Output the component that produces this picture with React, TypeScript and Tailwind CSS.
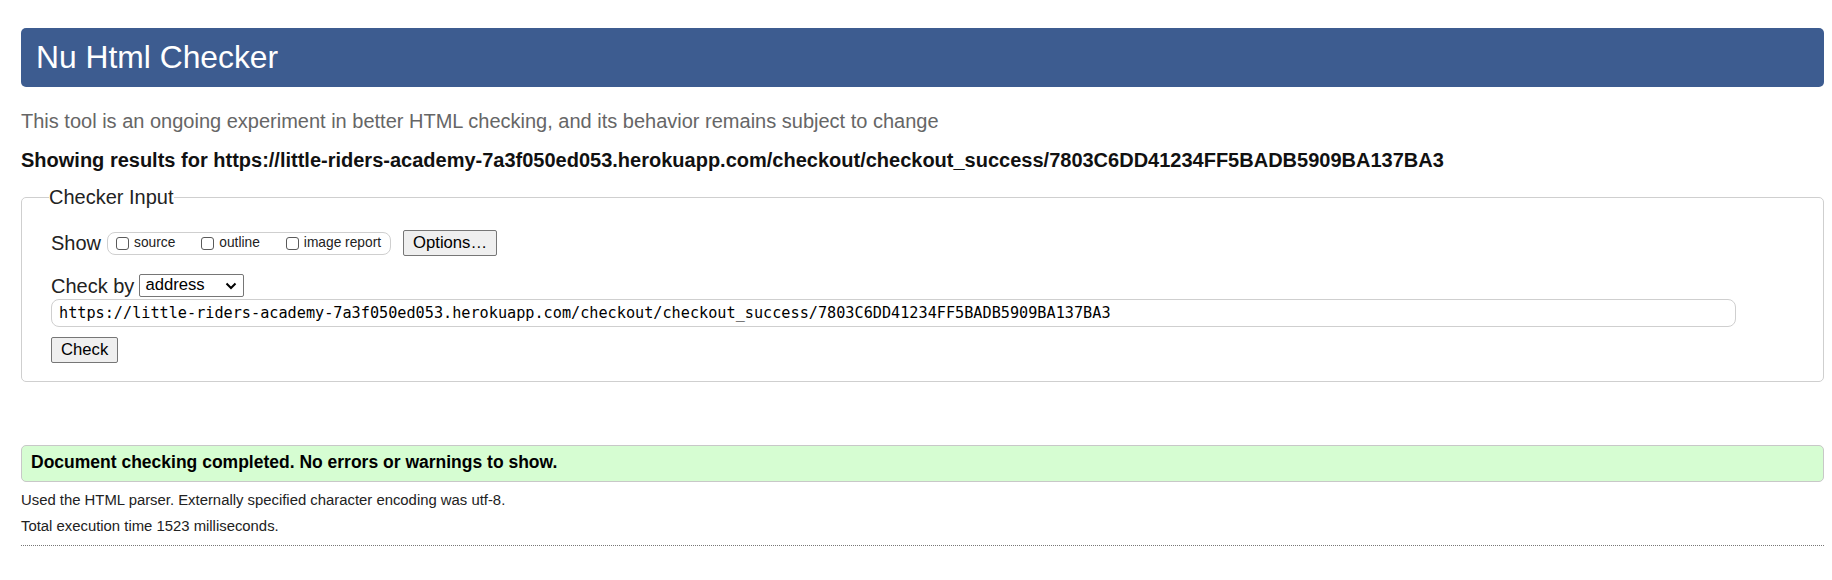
const URL_TEXT =
  "https://little-riders-academy-7a3f050ed053.herokuapp.com/checkout/checkout_success/7803C6DD41234FF5BADB5909BA137BA3";

const SHOW_OPTIONS = ["source", "outline", "image report"];

function NativeButton({ label }: { label: string }) {
  return (
    <button className="flex h-[26px] items-center rounded-[2px] border border-[#767676] bg-[#efefef] px-[9px] text-[16.67px] leading-none text-black">
      {label}
    </button>
  );
}

export default function App() {
  return (
    <div className="min-h-[580px] bg-white pl-[21px] pr-[8px] pt-[28px] font-['Liberation_Sans',Arial,sans-serif] text-[#1a1a1a]">
      {/* Title bar */}
      <h1 className="flex h-[59px] items-center rounded-[5px] bg-[#3d5c90] pl-[15px] text-[31.8px] leading-none font-normal text-white">
        Nu Html Checker
      </h1>

      <p className="mt-[23px] text-[20px] leading-[22px] text-[#666]">
        This tool is an ongoing experiment in better HTML checking, and its behavior remains subject to change
      </p>

      <p className="mt-[17px] text-[20px] leading-[22px] font-bold text-[#111]">
        Showing results for {URL_TEXT}
      </p>

      {/* Checker Input */}
      <fieldset className="mt-[15px] rounded-[5px] border border-[#cfcfcf] pb-[18px] pl-[29px] pr-[87px]">
        <legend className="-ml-[2px] text-[20px] leading-[23px] text-[#222]">Checker Input</legend>

        <div className="mt-[21px] flex h-[26px] items-center">
          <span className="text-[20px] leading-none text-[#222]">Show</span>
          <div className="ml-[6px] flex h-[23px] items-center rounded-[8px] border border-[#cfcfcf] pl-[8px] pr-[9px]">
            {SHOW_OPTIONS.map((opt, i) => (
              <label
                key={opt}
                className={`flex items-center gap-[5px] ${i > 0 ? "ml-[26px]" : ""}`}
              >
                <input
                  type="checkbox"
                  className="h-[13px] w-[13px] appearance-none rounded-[3px] border border-[#5a5a5a] bg-white"
                />
                <span className="text-[13.75px] leading-none text-[#222]">{opt}</span>
              </label>
            ))}
          </div>
          <div className="ml-[12px]">
            <NativeButton label="Options…" />
          </div>
        </div>

        <div className="mt-[18px] flex h-[23px] items-center">
          <span className="text-[20px] leading-none text-[#222]">Check by</span>
          <div className="ml-[5px] flex h-[23px] w-[105px] items-center justify-between rounded-[2px] border border-[#767676] bg-white pl-[5px] pr-[6px]">
            <span className="text-[16.67px] leading-none text-black">address</span>
            <svg width="12" height="8" viewBox="0 0 12 8" fill="none">
              <polyline points="1.5,1.5 6,6 10.5,1.5" stroke="#000" strokeWidth="2" />
            </svg>
          </div>
        </div>

        <input
          readOnly
          value={URL_TEXT}
          className="mt-[2px] block h-[28px] w-full rounded-[8px] border border-[#cfcfcf] bg-white px-[7px] font-['DejaVu_Sans_Mono',monospace] text-[15.2px] text-black outline-none"
        />

        <div className="mt-[10px] flex">
          <NativeButton label="Check" />
        </div>
      </fieldset>

      {/* Result */}
      <div className="mt-[63px] h-[37px] rounded-[5px] border border-[#c8c8c8] bg-[#d6fdd2] pl-[9px] pt-[6px]">
        <p className="text-[17.5px] leading-[20px] font-bold text-black">
          Document checking completed. No errors or warnings to show.
        </p>
      </div>

      <p className="mt-[9px] text-[14.875px] leading-[18px] text-[#222]">
        Used the HTML parser. Externally specified character encoding was utf-8.
      </p>
      <p className="mt-[8px] text-[14.875px] leading-[18px] text-[#222]">
        Total execution time 1523 milliseconds.
      </p>

      <hr className="mt-[10px] border-t border-dotted border-[#777]" />
    </div>
  );
}
